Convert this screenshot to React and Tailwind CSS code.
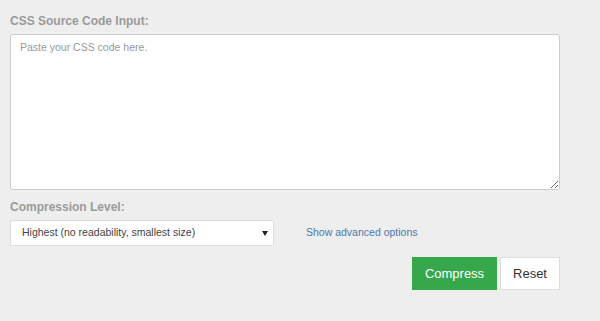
export default function App() {
  return (
    <div
      className="w-[600px] h-[321px] bg-[#eeeeee] px-[10px] pt-[12px]"
      style={{ fontFamily: '"Liberation Sans", Arial, sans-serif' }}
    >
      <div className="w-[550px]">
        <label className="block text-[12px] font-bold text-[#9a9a9a] leading-[18px] mb-[4px]">
          CSS Source Code Input:
        </label>
        <textarea
          className="block w-[550px] h-[156px] bg-white border border-[#cccccc] rounded-[3px] px-[9px] py-[5px] text-[10.5px] text-[#555] placeholder:text-[#999] outline-none"
          placeholder="Paste your CSS code here."
        />

        <label className="block text-[12px] font-bold text-[#9a9a9a] leading-[18px] mt-[8px] mb-[4px]">
          Compression Level:
        </label>
        <div className="flex items-center">
          <div className="relative w-[264px] h-[26px] bg-white border border-[#dcdcdc] rounded-[2px] flex items-center pl-[11px]">
            <span className="text-[10.5px] text-[#444]">Highest (no readability, smallest size)</span>
            <svg className="absolute right-[5px] top-[10px]" width="6" height="6" viewBox="0 0 6 6">
              <polygon points="0,0 6,0 3,5" fill="#222" />
            </svg>
          </div>
          <a className="ml-[32px] text-[10.5px] text-[#4a78ad] cursor-pointer">Show advanced options</a>
        </div>

        <div className="flex justify-end gap-[3px] mt-[11px]">
          <button className="w-[85px] h-[33px] bg-[#36a84b] text-white text-[13px] border border-[#36a84b]">
            Compress
          </button>
          <button className="w-[60px] h-[33px] bg-white text-[#333] text-[13px] border border-[#dddddd]">
            Reset
          </button>
        </div>
      </div>
    </div>
  )
}
